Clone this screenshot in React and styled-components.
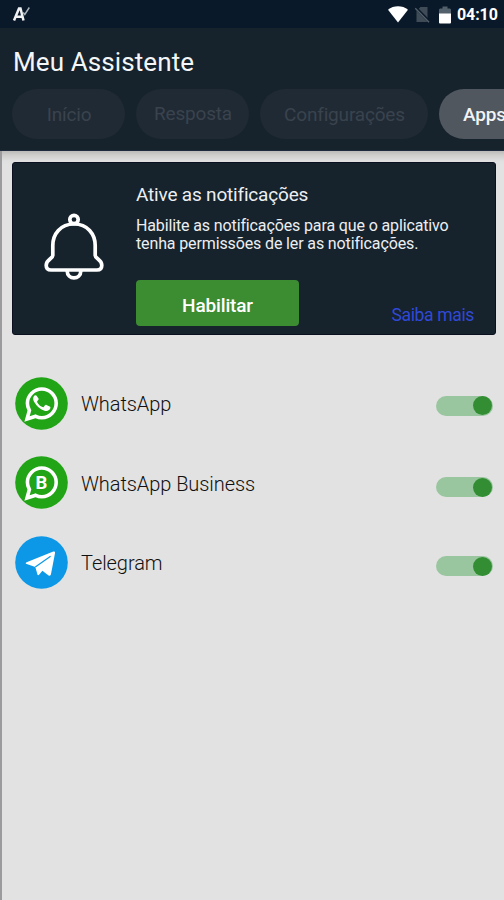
import React, { useState } from "react";
import styled, { createGlobalStyle } from "styled-components";

const GlobalStyle = createGlobalStyle`
  * {
    box-sizing: border-box;
  }
  body {
    margin: 0;
    background-color: #e2e2e2;
    font-family: Roboto, "Liberation Sans", sans-serif;
  }
`;

const Screen = styled.div`
  width: 504px;
  height: 900px;
  display: flex;
  flex-direction: column;
  overflow: hidden;
  background-color: #e2e2e2;
`;

const StatusBar = styled.div`
  flex: none;
  height: 28px;
  display: flex;
  align-items: center;
  padding: 0 6px 0 12px;
  background-color: #0a1929;
  color: #ffffff;
`;

const StatusIcons = styled.div`
  display: flex;
  align-items: center;
  margin-left: auto;
  padding-top: 1px;
`;

const Clock = styled.span`
  width: 41px;
  margin-left: 6px;
  padding-top: 1px;
  font-size: 16px;
  line-height: 18px;
  font-weight: 700;
  white-space: nowrap;
  letter-spacing: -0.1px;
`;

const Header = styled.header`
  flex: none;
  height: 123px;
  padding: 16px 0 0 12px;
  background-color: #16222c;
  border-bottom: 1px solid #1f2b3c;
`;

const Title = styled.h1`
  margin: 0;
  height: 45px;
  padding-left: 1px;
  font-size: 26px;
  line-height: 37px;
  font-weight: 400;
  letter-spacing: 0.1px;
  color: #f4f6f8;
`;

const Tabs = styled.nav`
  display: flex;
  overflow: hidden;
`;

const Tab = styled.button`
  flex: none;
  width: ${({ $width }) => $width}px;
  height: 50px;
  margin-right: 11px;
  padding: 0 0 ${({ $lift }) => ($lift ? 2 : 0)}px 1px;
  border: none;
  border-radius: 25px;
  background-color: ${({ $active }) => ($active ? "#51575f" : "#202a35")};
  color: ${({ $active }) => ($active ? "#f2f3f5" : "#3a434d")};
  font-family: inherit;
  font-size: 19px;
  font-weight: ${({ $active }) => ($active ? 500 : 400)};
  letter-spacing: -0.18px;
  cursor: pointer;
`;

const Content = styled.main`
  flex: 1;
  padding: 11px 8px 0 10px;
  border-left: 2px solid #9b9b9d;
  background: linear-gradient(#bdbbba, #cfcdcc 4px, #e0e0e0 10px, #e2e2e2 14px);
`;

const Card = styled.section`
  display: flex;
  height: 173px;
  border: 1px solid #0b1020;
  border-radius: 3px;
  background-color: #16222c;
  color: #eceff2;
`;

const BellBox = styled.div`
  flex: none;
  width: 123px;
  padding: 50px 0 0 30px;
`;

const CardBody = styled.div`
  flex: 1;
  padding-top: 20px;
`;

const CardTitle = styled.h2`
  margin: 0;
  font-size: 19px;
  line-height: 24px;
  font-weight: 400;
  white-space: nowrap;
  letter-spacing: -0.19px;
`;

const CardText = styled.p`
  margin: 10px 0 0;
  font-size: 16px;
  line-height: 18px;
  white-space: nowrap;
  letter-spacing: -0.13px;
`;

const Actions = styled.div`
  display: flex;
  justify-content: space-between;
  margin-top: 27px;
  padding-right: 21px;
`;

const EnableButton = styled.button`
  width: 163px;
  height: 46px;
  padding: 4px 0 0;
  border: none;
  border-radius: 4px;
  background-color: #3c8c31;
  color: #ffffff;
  font-family: inherit;
  font-size: 19px;
  font-weight: 500;
  letter-spacing: -0.15px;
  cursor: pointer;
`;

const Link = styled.a`
  padding-top: 25px;
  font-size: 17.5px;
  line-height: 21px;
  letter-spacing: -0.35px;
  color: #3049d6;
  white-space: nowrap;
`;

const List = styled.ul`
  margin: 42px 0 0;
  padding: 0 3px;
  list-style: none;
`;

const Item = styled.li`
  display: flex;
  align-items: center;
  height: 53px;
  margin-bottom: ${({ $gap }) => $gap}px;
`;

const Name = styled.span`
  flex: 1;
  margin-left: 13px;
  padding-top: ${({ $drop }) => $drop}px;
  font-size: 20px;
  font-weight: 300;
  letter-spacing: -0.07px;
  color: #101010;
`;

const Switch = styled.button`
  display: flex;
  justify-content: ${({ $on }) => ($on ? "flex-end" : "flex-start")};
  align-items: center;
  width: 57px;
  height: 20px;
  margin-top: ${({ $drop }) => $drop}px;
  padding: 0 1px;
  border: none;
  border-radius: 10px;
  background-color: ${({ $on }) => ($on ? "#99c69f" : "#b5b5b5")};
  cursor: pointer;
`;

const Thumb = styled.span`
  width: 19px;
  height: 19px;
  border-radius: 50%;
  background-color: ${({ $on }) => ($on ? "#338e33" : "#f1f1f1")};
`;

const Letter = styled.text`
  font-family: Roboto, sans-serif;
  font-size: 18.5px;
  font-weight: 700;
`;

const AppMark = () => (
  <svg width="20" height="18" viewBox="0 0 20 18" fill="none">
    <path d="M2 15.5 7 3.5h1.5L11.5 15.5M4 11.8h6.5" stroke="#f0f2f4" strokeWidth="2.5" />
    <path d="M11.2 7.5l1.6 2L17.3 2.5" stroke="#a9b2ba" strokeWidth="1.5" />
  </svg>
);

const Wifi = () => (
  <svg width="20" height="17" viewBox="0 0 20 17">
    <path d="M0 3.7C5.5-.9 14.5-.9 20 3.7L10 16.5z" fill="#fff" />
  </svg>
);

const SimSvg = styled.svg`
  margin-left: 7px;
`;

const NoSim = () => (
  <SimSvg width="15" height="17" viewBox="0 0 15 17">
    <path d="M5.5 1H12.5v15H1.5V5z" fill="#3f4c58" />
    <path d="M.5 1.5l14 14.5" stroke="#0a1929" strokeWidth="3" />
    <path d="M.2 2.2l13.8 14" stroke="#56616b" strokeWidth="1.4" />
  </SimSvg>
);

const BatterySvg = styled.svg`
  margin-left: 9px;
`;

const Battery = () => (
  <BatterySvg width="12" height="18" viewBox="0 0 12 18">
    <path d="M0 8V3.5L1 2.5h2.5V.5h5v2H11l1 1V8z" fill="#52606b" />
    <path d="M0 7.5h12V16.5q0 1-1 1H1q-1 0-1-1z" fill="#fff" />
  </BatterySvg>
);

const Bell = () => (
  <svg width="62" height="68" viewBox="0 0 62 68" fill="none" stroke="#fff" strokeWidth="3.7">
    <circle cx="31" cy="6.5" r="4.2" />
    <path
      d="M31 11C17.5 11 9.8 21 9.8 32.5V42.5C9.8 45.5 3.2 46.5 3.2 52.2C3.2 55.2 5 57 8 57H54C57 57 58.8 55.2 58.8 52.2C58.8 46.5 52.2 45.5 52.2 42.5V32.5C52.2 21 44.5 11 31 11Z"
      strokeLinejoin="round"
    />
    <path d="M24.2 58C24.2 67.2 37.8 67.2 37.8 58" />
  </svg>
);

const Bubble = ({ children }) => (
  <svg width="53" height="53" viewBox="0 0 53 53">
    <circle cx="26.5" cy="26.5" r="26.3" fill="#21a415" />
    <path
      d="M26.8 12C18.9 12 12.4 18.4 12.4 26.3C12.4 28.9 13.1 31.3 14.4 33.5L12 42L20.7 39.3C22.6 40.2 24.6 40.7 26.8 40.7C34.7 40.7 41.2 34.3 41.2 26.3C41.2 18.4 34.7 12 26.8 12Z"
      fill="none"
      stroke="#fff"
      strokeWidth="3.6"
    />
    {children}
  </svg>
);

const WhatsAppIcon = () => (
  <Bubble>
    <path
      d="M21.6 18.8c-.4-.8-2-.7-2.6.2-1.3 1.9-1 4.2.7 6.8 2.4 3.8 5.8 6.8 9.8 8 3 .9 5.4-.6 5.9-2.7.1-.8-.1-1.3-.8-1.6l-3.2-1.6c-.6-.3-1-.1-1.4.4l-1.3 1.6c-.3.4-.7.4-1.2.2-2.3-1-4.1-2.7-5.3-4.9-.3-.5-.1-.8.2-1.1l1-1.3c.3-.4.3-.8.1-1.2z"
      fill="#fff"
    />
  </Bubble>
);

const BusinessIcon = () => (
  <Bubble>
    <Letter x="26.3" y="32.5" textAnchor="middle" fill="#fff">B</Letter>
  </Bubble>
);

const TelegramIcon = () => (
  <svg width="53" height="53" viewBox="0 0 53 53">
    <circle cx="26.5" cy="26.5" r="26.3" fill="#0c98e6" />
    <path
      d="M11.6 26.2 38.3 15.6c1.2-.4 2 .3 1.7 1.7L36 38.1c-.3 1.6-1.2 2-2.4 1.3l-6.2-4.6-3.3 3.9c-.7.8-1.5.6-1.7-.4L20.3 31l-8.6-2.9c-1.3-.5-1.3-1.3-.1-1.9z"
      fill="#fff"
    />
    <path d="M20.3 31 35.6 20.2" fill="none" stroke="#0c98e6" strokeWidth="1.2" />
  </svg>
);

const apps = [
  { name: "WhatsApp", icon: WhatsAppIcon, gap: 26, nameDrop: 1, drop: 4 },
  { name: "WhatsApp Business", icon: BusinessIcon, gap: 27, nameDrop: 2, drop: 9 },
  { name: "Telegram", icon: TelegramIcon, gap: 0, nameDrop: 1, drop: 7 },
];

const AppRow = ({ app }) => {
  const [on, setOn] = useState(true);
  const Icon = app.icon;

  return (
    <Item $gap={app.gap}>
      <Icon />
      <Name $drop={app.nameDrop}>{app.name}</Name>
      <Switch $on={on} $drop={app.drop} onClick={() => setOn(!on)}>
        <Thumb $on={on} />
      </Switch>
    </Item>
  );
};

const App = () => {
  return (
    <>
      <GlobalStyle />
      <Screen>
        <StatusBar>
          <AppMark />
          <StatusIcons>
            <Wifi />
            <NoSim />
            <Battery />
            <Clock>04:10</Clock>
          </StatusIcons>
        </StatusBar>
        <Header>
          <Title>Meu Assistente</Title>
          <Tabs>
            <Tab $width={113}>Início</Tab>
            <Tab $width={113} $lift>Resposta</Tab>
            <Tab $width={168}>Configurações</Tab>
            <Tab $width={90} $active>Apps</Tab>
          </Tabs>
        </Header>
        <Content>
          <Card>
            <BellBox>
              <Bell />
            </BellBox>
            <CardBody>
              <CardTitle>Ative as notificações</CardTitle>
              <CardText>
                Habilite as notificações para que o aplicativo
                <br />
                tenha permissões de ler as notificações.
              </CardText>
              <Actions>
                <EnableButton>Habilitar</EnableButton>
                <Link>Saiba mais</Link>
              </Actions>
            </CardBody>
          </Card>
          <List>
            {apps.map((app) => (
              <AppRow key={app.name} app={app} />
            ))}
          </List>
        </Content>
      </Screen>
    </>
  );
};

export default App;
